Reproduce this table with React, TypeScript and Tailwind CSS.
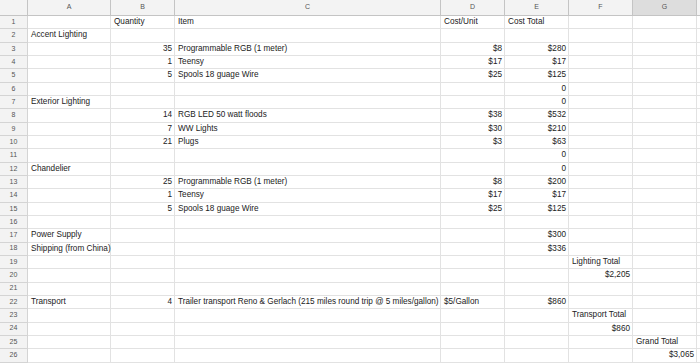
type Cell = { v: string; r?: boolean }
type Row = Partial<Record<'A' | 'B' | 'C' | 'D' | 'E' | 'F' | 'G', Cell>>

const cols = ['A', 'B', 'C', 'D', 'E', 'F', 'G'] as const

const L = (v: string): Cell => ({ v })
const R = (v: string): Cell => ({ v, r: true })

const rows: Row[] = [
  { B: L('Quantity'), C: L('Item'), D: L('Cost/Unit'), E: L('Cost Total') },
  { A: L('Accent Lighting') },
  { B: R('35'), C: L('Programmable RGB (1 meter)'), D: R('$8'), E: R('$280') },
  { B: R('1'), C: L('Teensy'), D: R('$17'), E: R('$17') },
  { B: R('5'), C: L('Spools 18 guage Wire'), D: R('$25'), E: R('$125') },
  { E: R('0') },
  { A: L('Exterior Lighting'), E: R('0') },
  { B: R('14'), C: L('RGB LED 50 watt floods'), D: R('$38'), E: R('$532') },
  { B: R('7'), C: L('WW Lights'), D: R('$30'), E: R('$210') },
  { B: R('21'), C: L('Plugs'), D: R('$3'), E: R('$63') },
  { E: R('0') },
  { A: L('Chandelier'), E: R('0') },
  { B: R('25'), C: L('Programmable RGB (1 meter)'), D: R('$8'), E: R('$200') },
  { B: R('1'), C: L('Teensy'), D: R('$17'), E: R('$17') },
  { B: R('5'), C: L('Spools 18 guage Wire'), D: R('$25'), E: R('$125') },
  {},
  { A: L('Power Supply'), E: R('$300') },
  { A: L('Shipping (from China)'), E: R('$336') },
  { F: L('Lighting Total') },
  { F: R('$2,205') },
  {},
  {
    A: L('Transport'),
    B: R('4'),
    C: L('Trailer transport Reno & Gerlach (215 miles round trip @ 5 miles/gallon)'),
    D: L('$5/Gallon'),
    E: R('$860'),
  },
  { F: L('Transport Total') },
  { F: R('$860') },
  { G: L('Grand Total') },
  { G: R('$3,065') },
]

export default function App() {
  return (
    <div className="h-[364px] w-[700px] overflow-hidden bg-white font-['Liberation_Sans',Arial,sans-serif] text-[8.2px] text-[#222]">
      <div className="grid grid-cols-[28px_83px_64px_266px_64px_64px_64px_64px_1fr] grid-rows-[16px] auto-rows-[13.33px]">
        {/* header row */}
        <div className="border-r border-b border-[#c4c4c4] bg-[#f3f3f3]" />
        {cols.map((c) => (
          <div
            key={c}
            className={`flex items-center justify-center border-r border-b border-[#c4c4c4] text-[7px] text-[#555] ${c === 'G' ? 'bg-[#dddddd]' : 'bg-[#f3f3f3]'}`}
          >
            {c}
          </div>
        ))}
        <div className="border-b border-[#c4c4c4] bg-[#f3f3f3]" />

        {rows.map((row, i) => (
          <div key={i} className="contents">
            <div className="flex items-center justify-center border-r border-b border-[#d4d4d4] bg-[#f3f3f3] text-[7px] text-[#555]">
              {i + 1}
            </div>
            {cols.map((c) => {
              const cell = row[c]
              return (
                <div
                  key={c}
                  className={`relative flex items-center whitespace-nowrap border-r border-b border-[#e2e2e2] ${cell?.r ? 'justify-end pr-[2px]' : 'pl-[3px]'}`}
                >
                  {cell?.v}
                </div>
              )
            })}
            <div className="border-b border-[#e2e2e2]" />
          </div>
        ))}
      </div>
    </div>
  )
}
